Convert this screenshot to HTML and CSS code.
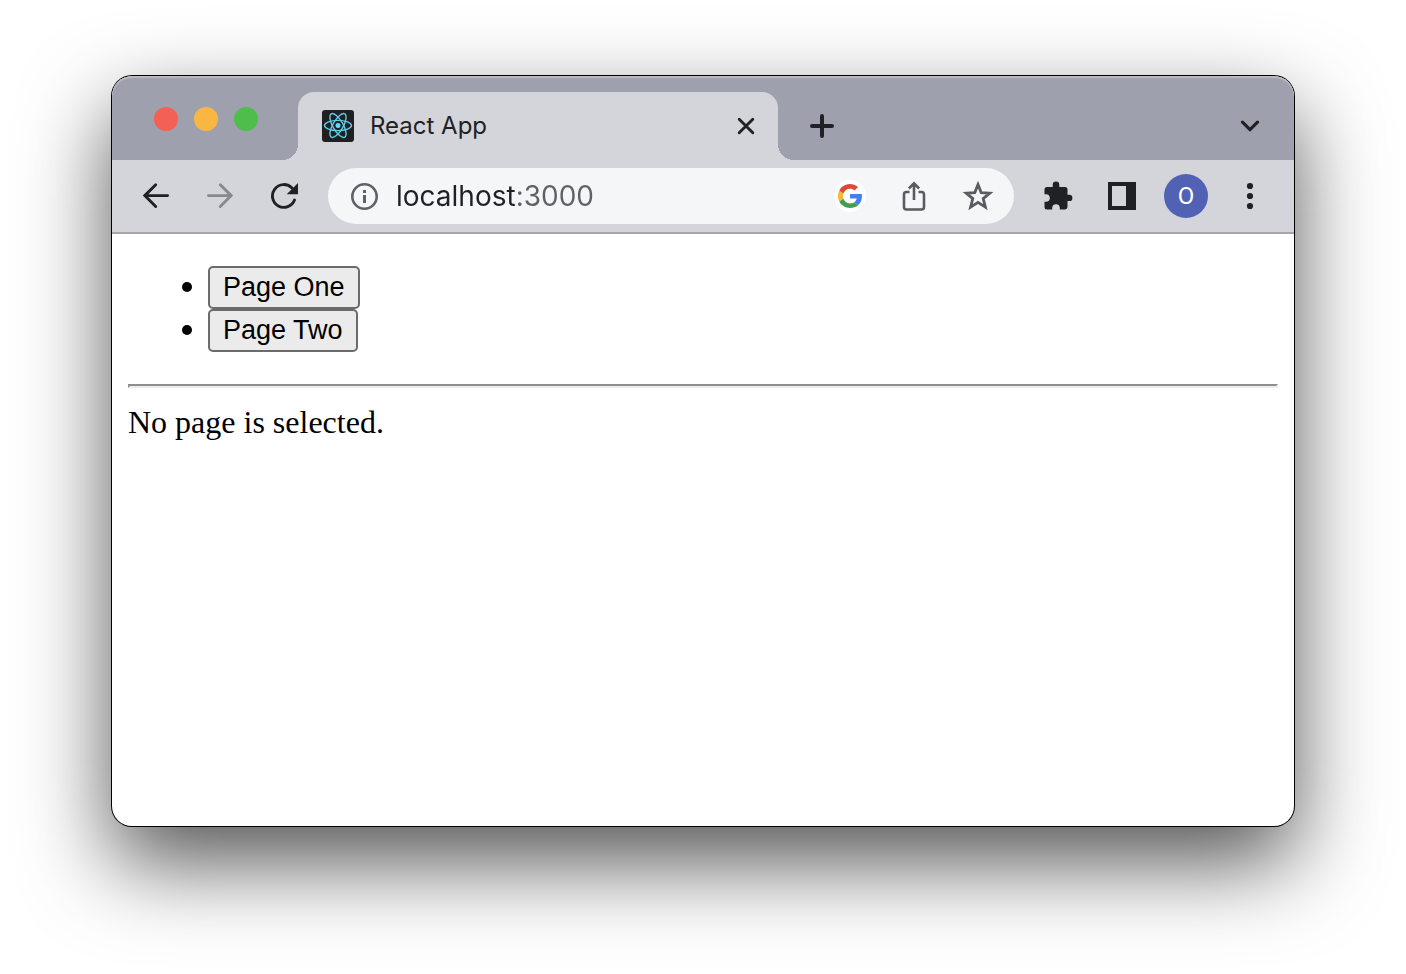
FILE: index.html
```html
<!DOCTYPE html>
<html lang="en">
<head>
<meta charset="utf-8">
<meta name="viewport" content="width=device-width, initial-scale=1">
<title>React App</title>
<link rel="stylesheet" href="styles.css">
</head>
<body>
<div class="window">
  <header class="tab-strip">
    <div class="lights">
      <button class="light light-close" aria-label="Close window"></button>
      <button class="light light-minimize" aria-label="Minimize window"></button>
      <button class="light light-zoom" aria-label="Zoom window"></button>
    </div>
    <div class="tab">
      <svg class="favicon" viewBox="0 0 32 32" aria-hidden="true">
        <rect width="32" height="32" rx="3" fill="#202020"/>
        <circle cx="16" cy="15.5" r="2.5" fill="#61dafb"/>
        <g fill="none" stroke="#61c9ee" stroke-width="1.4">
          <ellipse cx="16" cy="15.5" rx="13.5" ry="5.1"/>
          <ellipse cx="16" cy="15.5" rx="13.5" ry="5.1" transform="rotate(60 16 15.5)"/>
          <ellipse cx="16" cy="15.5" rx="13.5" ry="5.1" transform="rotate(120 16 15.5)"/>
        </g>
      </svg>
      <span class="tab-title">React App</span>
      <button class="icon-button tab-close" aria-label="Close tab">
        <svg width="20" height="20" viewBox="0 0 20 20"><path d="M3.2 3.2l13.600 13.600M16.800 3.200L3.200 16.800" fill="none" stroke="#202124" stroke-width="2.900" stroke-linecap="round"/></svg>
      </button>
    </div>
    <button class="icon-button new-tab" aria-label="New tab">
      <svg width="24" height="24" viewBox="0 0 24 24"><path d="M12 2v20M2 12h20" fill="none" stroke="#202124" stroke-width="4" stroke-linecap="round"/></svg>
    </button>
    <button class="icon-button tab-search" aria-label="Search tabs">
      <svg width="20" height="12" viewBox="0 0 20 12"><path d="M2.500 2.200L10 9.700 17.500 2.200" fill="none" stroke="#202124" stroke-width="3.200" stroke-linecap="round" stroke-linejoin="round"/></svg>
    </button>
  </header>

  <nav class="toolbar" aria-label="Browser toolbar">
    <button class="icon-button" aria-label="Back">
      <svg width="28" height="28" viewBox="0 0 28 28"><path d="M25.600 13.600H3M13.700 2.700L2.800 13.600 13.700 24.500" fill="none" stroke="#202124" stroke-width="2.900" stroke-linecap="round"/></svg>
    </button>
    <button class="icon-button" aria-label="Forward">
      <svg width="28" height="28" viewBox="0 0 28 28"><path d="M2.400 13.600H25M14.300 2.700L25.200 13.600 14.300 24.500" fill="none" stroke="#88898e" stroke-width="2.900" stroke-linecap="round"/></svg>
    </button>
    <button class="icon-button" aria-label="Reload">
      <svg width="28" height="28" viewBox="0 0 28 28"><path d="M24.500 18A11.400 11.400 0 1 1 22 6" fill="none" stroke="#202124" stroke-width="2.900" stroke-linecap="round"/><path d="M28 1v11.300H16.700z" fill="#202124"/></svg>
    </button>
    <form class="address-bar">
      <svg class="site-info" viewBox="0 0 28 28" aria-hidden="true"><circle cx="14.500" cy="14.500" r="12.200" fill="none" stroke="#5f6168" stroke-width="2.600"/><path d="M13 8h3v3h-3zM13 13h3v8h-3z" fill="#5f6168"/></svg>
      <input class="address" type="text" value="localhost:3000" aria-label="Address" spellcheck="false">
      <button class="icon-button" type="button" aria-label="Google">
        <svg width="32" height="32" viewBox="0 0 32 32"><circle cx="16" cy="16" r="16" fill="#fff"/><g transform="translate(4 4)">
          <path fill="#4080ec" d="M23.800 10H12v4.500h6.700c-.3 1.600-1.100 2.800-2.400 3.700l3.800 3.100C23 18.700 24.500 14.800 23.800 10z"/>
          <path fill="#439d50" d="M12 24c3.200 0 6-1 8.100-2.700l-3.900-3.100c-1 .8-2.400 1.200-4.200 1.200-3.100 0-5.700-2.100-6.700-4.900l-4 3.100C3.400 21.500 7.400 24 12 24z"/>
          <path fill="#f5b935" d="M5.300 14.500a7.200 7.200 0 0 1 0-4.900l-4-3.100a12 12 0 0 0 0 11.100z"/>
          <path fill="#dc4a38" d="M12 4.700c1.700 0 3.300.6 4.600 1.800L20 3.100A12 12 0 0 0 1.300 6.500l4 3.100c1-2.800 3.600-4.900 6.700-4.900z"/></g></svg>
      </button>
      <button class="icon-button" type="button" aria-label="Share">
        <svg width="28" height="32" viewBox="0 0 28 32"><path d="M9.500 12H6.500a2.500 2.500 0 0 0-2.500 2.500v12.500a2.500 2.500 0 0 0 2.500 2.500h15a2.500 2.500 0 0 0 2.500-2.500V14.500a2.500 2.500 0 0 0-2.500-2.500h-3M14 20V4M8.900 8.500L14 3.400l5.100 5.100" fill="none" stroke="#5a5b60" stroke-width="2.600"/></svg>
      </button>
      <button class="icon-button" type="button" aria-label="Bookmark this tab">
        <svg width="32" height="32" viewBox="0 0 32 32"><path d="M16 4.500l3.200 8.100 8.600.6-6.600 5.400 2.200 8.500-7.400-4.700-7.400 4.700 2.200-8.500-6.600-5.400 8.600-.6z" fill="none" stroke="#5a5b60" stroke-width="2.800"/></svg>
      </button>
    </form>
    <button class="icon-button" aria-label="Extensions">
      <svg width="30" height="30" viewBox="0 0 30 30"><path fill="#202124" d="M4 6h5.700V3.800a3.300 3.300 0 0 1 6.600 0V6H22a2.500 2.500 0 0 1 2.500 2.500v5.200h1.700a3.200 3.200 0 0 1 0 6.400h-1.700v6A2.500 2.500 0 0 1 22 28.500h-5.200V27a3.800 3.800 0 0 0-7.600 0v1.500H4A2.500 2.500 0 0 1 1.500 26v-5.200H3a3.800 3.800 0 0 0 0-7.600H1.500V8.500A2.500 2.500 0 0 1 4 6z"/></svg>
    </button>
    <button class="icon-button" aria-label="Side panel">
      <svg width="28" height="28" viewBox="0 0 28 28"><path fill="#202124" fill-rule="evenodd" d="M0 0h28v28H0zM4 4v20h14V4z"/></svg>
    </button>
    <button class="icon-button" aria-label="Profile"><span class="avatar">O</span></button>
    <button class="icon-button" aria-label="Menu">
      <svg width="8" height="28" viewBox="0 0 8 28" fill="#202124"><circle cx="4" cy="4" r="3.100"/><circle cx="4" cy="14" r="3.100"/><circle cx="4" cy="24" r="3.100"/></svg>
    </button>
  </nav>

  <main class="page">
    <ul class="page-list">
      <li><button class="page-button">Page One</button></li>
      <li><button class="page-button">Page Two</button></li>
    </ul>
    <hr class="divider">
    <div>No page is selected.</div>
  </main>
</div>
</body>
</html>
```
FILE: styles.css
```css
* {
  box-sizing: border-box;
}

body {
  display: flex;
  min-height: 100vh;
  margin: 0;
  padding: 76px 112px 148px;
  background: #fff;
}

button {
  font: inherit;
}

.window {
  display: flex;
  flex: 1;
  flex-direction: column;
  min-width: 0;
  overflow: hidden;
  border-radius: 20px;
  background: #fff;
  box-shadow: 0 0 0 1px #000, 0 36px 88px rgba(0, 0, 0, 0.68);
}

.tab-strip {
  display: flex;
  height: 84px;
  padding: 16px 12px 0 42px;
  border-radius: 20px 20px 0 0;
  background: #9ea1ad;
  box-shadow: inset 0 2px 1px #b9bbc3;
  font-family: Inter, sans-serif;
}

.lights {
  display: flex;
  gap: 16px;
  margin-right: 40px;
  padding-top: 15px;
}

.light {
  width: 24px;
  height: 24px;
  padding: 0;
  border: 0;
  border-radius: 50%;
}

.light-close {
  background: #f46054;
}

.light-minimize {
  background: #f9b643;
}

.light-zoom {
  background: #4fbd4b;
}

.tab {
  position: relative;
  display: flex;
  flex: 0 1 480px;
  align-items: center;
  gap: 16px;
  padding: 0 8px 0 24px;
  border-radius: 16px 16px 0 0;
  background: #d4d5da;
}

.tab::before,
.tab::after {
  position: absolute;
  bottom: 0;
  width: 16px;
  height: 16px;
  content: "";
}

.tab::before {
  right: 100%;
  background: radial-gradient(circle at 0 0, transparent 16px, #d4d5da 16px);
}

.tab::after {
  left: 100%;
  background: radial-gradient(circle at 100% 0, transparent 16px, #d4d5da 16px);
}

.favicon {
  flex: none;
  width: 32px;
  height: 32px;
}

.tab-title {
  flex: 1;
  padding-bottom: 2px;
  color: #202124;
  font-size: 24px;
}

.icon-button {
  display: flex;
  flex: none;
  align-items: center;
  justify-content: center;
  width: 64px;
  height: 56px;
  padding: 0;
  border: 0;
  background: transparent;
}

.tab-close {
  width: 48px;
}

.new-tab {
  height: 68px;
  margin-left: 12px;
}

.tab-search {
  height: 68px;
  margin-left: auto;
}

.toolbar {
  display: flex;
  align-items: center;
  padding: 8px 12px;
  border-bottom: 2px solid #a5a6ab;
  background: #d4d5da;
  font-family: Inter, sans-serif;
}

.address-bar {
  display: flex;
  flex: 1;
  align-items: center;
  min-width: 0;
  height: 56px;
  margin: 0 12px;
  padding: 0 4px 0 22px;
  border-radius: 28px;
  background: #f5f6f8;
}

.site-info {
  flex: none;
  width: 28px;
  height: 28px;
  margin-right: 18px;
}

.address {
  flex: 1;
  min-width: 0;
  padding: 0;
  border: 0;
  background: linear-gradient(90deg, #202124 120px, #5f6168 120px);
  background-clip: text;
  color: transparent;
  font-family: Inter, sans-serif;
  font-size: 28px;
}

.avatar {
  width: 44px;
  border-radius: 50%;
  background: #5161b3;
  color: #fff;
  font-family: Roboto, sans-serif;
  font-size: 24px;
  line-height: 44px;
}

.page {
  padding: 32px 16px;
  color: #000;
  font-family: "Liberation Serif", serif;
  font-size: 32px;
  line-height: 37px;
}

.page-list {
  margin: 0 0 32px;
  padding-left: 80px;
}

.page-button {
  display: block;
  height: 43px;
  padding: 0 13px;
  border: 2px solid #6b6b6b;
  border-radius: 5px;
  background: #ebebeb;
  color: #000;
  font-family: "Liberation Sans", sans-serif;
  font-size: 27px;
  line-height: 37px;
}

.divider {
  margin: 0 0 16px;
  border: 2px solid;
  border-color: #8e8e8e #ececec #ececec #8e8e8e;
}
```
